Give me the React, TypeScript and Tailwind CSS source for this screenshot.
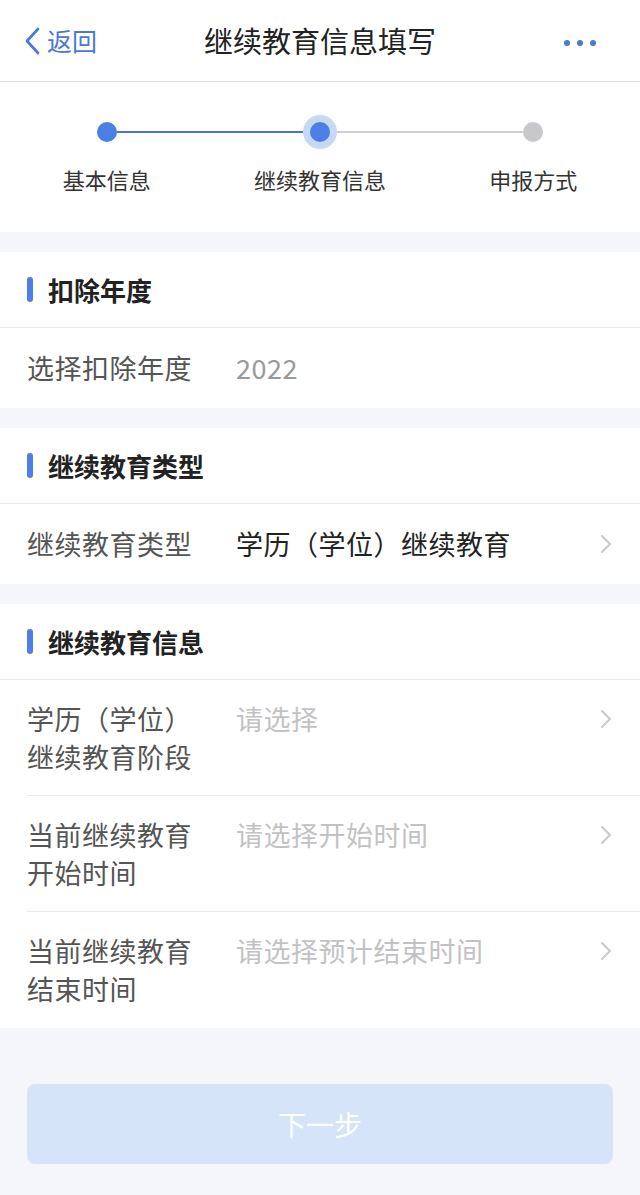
import React from 'react';

const FONT = { fontFamily: '"Noto Sans CJK SC", "Noto Sans", sans-serif' };

type Step = { label: string; state: 'done' | 'current' | 'todo' };

const steps: Step[] = [
  { label: '基本信息', state: 'done' },
  { label: '继续教育信息', state: 'current' },
  { label: '申报方式', state: 'todo' },
];

function Chevron() {
  return (
    <svg width="12" height="20" viewBox="0 0 12 20" fill="none" className="shrink-0">
      <path d="M2 2l8 8-8 8" stroke="#c9c9cc" strokeWidth="2" strokeLinecap="round" strokeLinejoin="round" />
    </svg>
  );
}

function Stepper() {
  return (
    <div className="grid grid-cols-3 bg-white pt-[33px] h-[150px]">
      {steps.map((s, i) => {
        const leftColor = i === 0 ? 'bg-transparent' : steps[i].state === 'todo' ? 'bg-[#cfcfd2]' : 'bg-[#4a73c9]';
        const rightColor =
          i === steps.length - 1 ? 'bg-transparent' : steps[i + 1].state === 'todo' ? 'bg-[#cfcfd2]' : 'bg-[#4a73c9]';
        return (
          <div key={s.label} className="flex flex-col items-center">
            <div className="flex items-center w-full h-[34px]">
              <div className={`flex-1 h-[2px] ${leftColor}`} />
              {s.state === 'current' ? (
                <div className="w-[34px] h-[34px] rounded-full bg-[#c5d9f5] flex items-center justify-center">
                  <div className="w-[20px] h-[20px] rounded-full bg-[#4b7fe6]" />
                </div>
              ) : (
                <div className={`w-[20px] h-[20px] rounded-full ${s.state === 'done' ? 'bg-[#4b7fe6]' : 'bg-[#c8c8cc]'}`} />
              )}
              <div className={`flex-1 h-[2px] ${rightColor}`} />
            </div>
            <div className="mt-[14px] text-[22px] leading-[32px] text-[#333]">{s.label}</div>
          </div>
        );
      })}
    </div>
  );
}

function SectionHeader({ title }: { title: string }) {
  return (
    <div className="h-[76px] flex items-center px-[27px] border-b border-[#ebebeb]">
      <div className="w-[6px] h-[25px] rounded-full bg-[#4b7fe6]" />
      <div className="ml-[15px] text-[26px] font-bold text-[#222]">{title}</div>
    </div>
  );
}

type RowProps = {
  label: React.ReactNode;
  value: string;
  tone: 'dark' | 'muted' | 'placeholder';
  arrow?: boolean;
  divider?: boolean;
  pad?: string;
};

function Row({ label, value, tone, arrow, divider, pad = 'py-[21px]' }: RowProps) {
  const color = tone === 'dark' ? 'text-[#222]' : tone === 'muted' ? 'text-[#999]' : 'text-[#c2c2c4]';
  return (
    <div className="pl-[27px]">
      <div className={`flex items-start ${pad} pr-[28px] ${divider ? 'border-b border-[#ebebeb]' : ''}`}>
        <div className="w-[168px] shrink-0 text-[27px] tracking-[0.5px] leading-[38px] text-[#555]">{label}</div>
        <div className={`flex-1 pl-[41px] text-[27px] tracking-[0.5px] leading-[38px] ${color}`}>{value}</div>
        {arrow && (
          <div className="h-[38px] flex items-center">
            <Chevron />
          </div>
        )}
      </div>
    </div>
  );
}

export default function App() {
  return (
    <div className="w-[640px] min-h-[1195px] bg-[#f4f6f9]" style={FONT}>
      {/* nav bar */}
      <div className="h-[82px] bg-white border-b border-[#e2e2e2] flex items-center px-[24px]">
        <div className="flex items-center w-[120px] text-[#4a78d6]">
          <svg width="18" height="28" viewBox="0 0 18 28" fill="none">
            <path d="M14 2L3 14l11 12" stroke="#4a78d6" strokeWidth="2.6" strokeLinecap="round" strokeLinejoin="round" />
          </svg>
          <span className="ml-[5px] text-[25px]">返回</span>
        </div>
        <div className="flex-1 text-center text-[29px] text-[#222]">继续教育信息填写</div>
        <div className="w-[120px] flex justify-end gap-[7px] pr-[20px] mt-[4px]">
          <span className="w-[6px] h-[6px] rounded-full bg-[#4a78d6]" />
          <span className="w-[6px] h-[6px] rounded-full bg-[#4a78d6]" />
          <span className="w-[6px] h-[6px] rounded-full bg-[#4a78d6]" />
        </div>
      </div>

      <Stepper />

      <div className="mt-[20px] bg-white">
        <SectionHeader title="扣除年度" />
        <Row label="选择扣除年度" value="2022" tone="muted" />
      </div>

      <div className="mt-[20px] bg-white">
        <SectionHeader title="继续教育类型" />
        <Row label="继续教育类型" value="学历（学位）继续教育" tone="dark" arrow />
      </div>

      <div className="mt-[20px] bg-white">
        <SectionHeader title="继续教育信息" />
        <Row label="学历（学位）继续教育阶段" value="请选择" tone="placeholder" arrow divider pad="pt-[20px] pb-[19px]" />
        <Row label="当前继续教育开始时间" value="请选择开始时间" tone="placeholder" arrow divider pad="pt-[20px] pb-[19px]" />
        <Row label="当前继续教育结束时间" value="请选择预计结束时间" tone="placeholder" arrow pad="pt-[20px] pb-[20px]" />
      </div>

      <div className="px-[27px] pt-[56px] pb-[31px]">
        <button className="w-full h-[80px] rounded-[8px] bg-[#d5e4f8] text-white text-[28px]">下一步</button>
      </div>
    </div>
  );
}
